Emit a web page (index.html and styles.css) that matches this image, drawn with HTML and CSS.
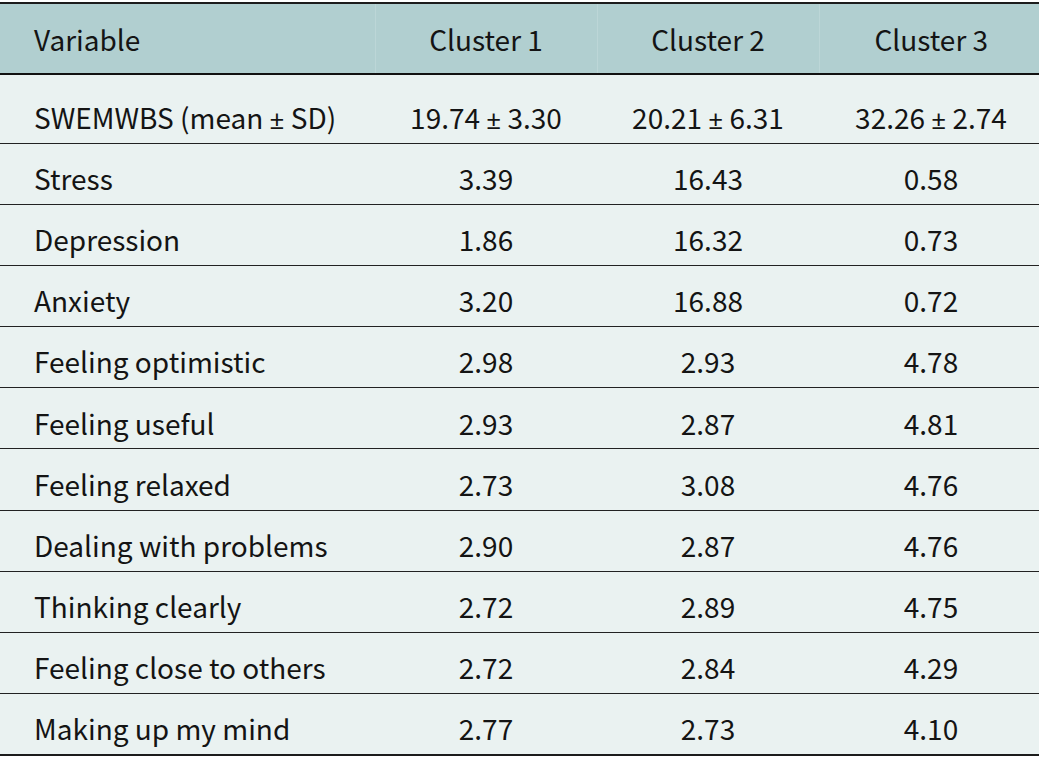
FILE: index.html
```html
<!DOCTYPE html>
<html lang="en">
<head>
<meta charset="utf-8">
<title>Cluster table</title>
<link rel="stylesheet" href="styles.css">
</head>
<body>
<table class="data">
  <colgroup>
    <col class="c-var">
    <col class="c-num">
    <col class="c-num">
    <col class="c-last">
  </colgroup>
  <thead>
    <tr>
      <th class="lbl">Variable</th>
      <th>Cluster 1</th>
      <th>Cluster 2</th>
      <th class="last">Cluster 3</th>
    </tr>
  </thead>
  <tbody>
    <tr class="first"><td class="lbl">SWEMWBS (mean <span class="pm">±</span> SD)</td><td>19.74 <span class="pm">±</span> 3.30</td><td>20.21 <span class="pm">±</span> 6.31</td><td class="last">32.26 <span class="pm">±</span> 2.74</td></tr>
    <tr><td class="lbl">Stress</td><td>3.39</td><td>16.43</td><td class="last">0.58</td></tr>
    <tr><td class="lbl">Depression</td><td>1.86</td><td>16.32</td><td class="last">0.73</td></tr>
    <tr><td class="lbl">Anxiety</td><td>3.20</td><td>16.88</td><td class="last">0.72</td></tr>
    <tr><td class="lbl">Feeling optimistic</td><td>2.98</td><td>2.93</td><td class="last">4.78</td></tr>
    <tr><td class="lbl">Feeling useful</td><td>2.93</td><td>2.87</td><td class="last">4.81</td></tr>
    <tr><td class="lbl">Feeling relaxed</td><td>2.73</td><td>3.08</td><td class="last">4.76</td></tr>
    <tr><td class="lbl">Dealing with problems</td><td>2.90</td><td>2.87</td><td class="last">4.76</td></tr>
    <tr><td class="lbl">Thinking clearly</td><td>2.72</td><td>2.89</td><td class="last">4.75</td></tr>
    <tr><td class="lbl">Feeling close to others</td><td>2.72</td><td>2.84</td><td class="last">4.29</td></tr>
    <tr class="final"><td class="lbl">Making up my mind</td><td>2.77</td><td>2.73</td><td class="last">4.10</td></tr>
  </tbody>
</table>
</body>
</html>
```
FILE: styles.css
```css
html, body {
  margin: 0;
  padding: 0;
  background: #ffffff;
}

body {
  padding-top: 2px;
  font-family: "Noto Sans CJK SC", "Noto Sans", sans-serif;
  font-size: 28px;
  color: #141414;
}

.data {
  width: 1039px;
  border-collapse: collapse;
  table-layout: fixed;
  border-top: 2px solid #1c1c1c;
  border-bottom: 2px solid #1c1c1c;
}

.c-var { width: 375px; }
.c-num { width: 222px; }
.c-last { width: 220px; }

.data th,
.data td {
  padding: 0;
  text-align: center;
  font-weight: normal;
  vertical-align: middle;
  white-space: nowrap;
  line-height: 1.2;
}

.data th {
  padding-top: 2px;
}

.data td {
  padding-top: 10px;
}

.pm {
  font-family: "Noto Sans", "DejaVu Sans", sans-serif;
  font-size: 26px;
}

.data th.lbl,
.data td.lbl {
  text-align: left;
  padding-left: 34px;
}

.data .last {
  padding-left: 4px;
}

.data thead tr {
  background: #b1cfd0;
  height: 71px;
  border-bottom: 2px solid #111111;
}

.data thead th + th {
  border-left: 1px solid #bcd6d7;
}

.data tbody tr {
  background: #eaf2f1;
  height: 61.2px;
  border-bottom: 1px solid #222222;
}

.data tbody tr.first {
  height: 69px;
}

.data tbody tr.first td {
  padding-top: 18px;
}

.data tbody tr.final {
  border-bottom: none;
}
```
